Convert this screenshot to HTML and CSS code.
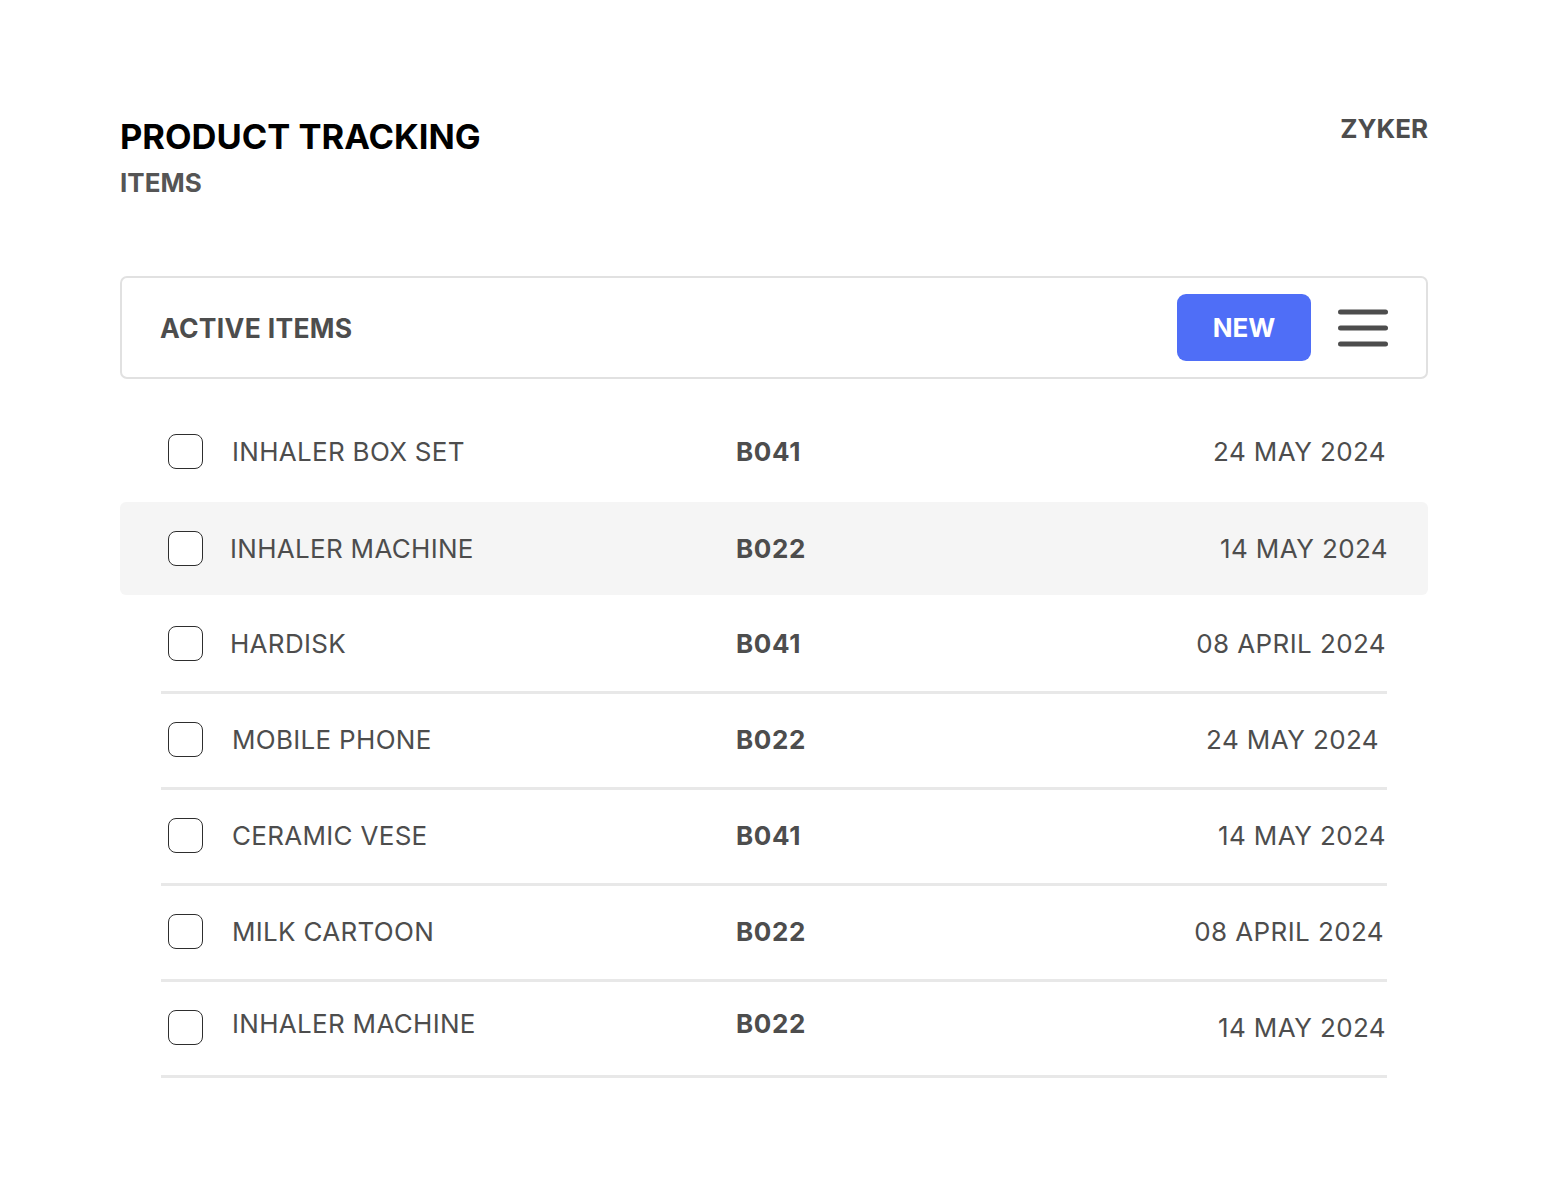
FILE: index.html
```html
<!DOCTYPE html>
<html lang="en">
<head>
<meta charset="utf-8">
<title>Product Tracking</title>
<link rel="stylesheet" href="styles.css">
</head>
<body>
<div class="page">
  <header class="header">
    <div class="titles">
      <h1 class="title">PRODUCT TRACKING</h1>
      <div class="subtitle">ITEMS</div>
    </div>
    <div class="brand">ZYKER</div>
  </header>

  <section class="toolbar">
    <div class="toolbar-title">ACTIVE ITEMS</div>
    <div class="toolbar-actions">
      <button class="btn-new">NEW</button>
      <svg class="menu-icon" width="50" height="38" viewBox="0 0 50 38">
        <line x1="2.5" y1="3" x2="47.5" y2="3" />
        <line x1="2.5" y1="19" x2="47.5" y2="19" />
        <line x1="2.5" y1="35" x2="47.5" y2="35" />
      </svg>
    </div>
  </section>

  <div class="list">
    <div class="row">
      <span class="check"></span>
      <span class="name">INHALER BOX SET</span>
      <span class="code">B041</span>
      <span class="date">24 MAY 2024</span>
    </div>
    <div class="row row-active">
      <span class="check"></span>
      <span class="name name-tight">INHALER MACHINE</span>
      <span class="code">B022</span>
      <span class="date date-wide">14 MAY 2024</span>
    </div>
    <div class="row row-sep">
      <span class="check"></span>
      <span class="name name-tight">HARDISK</span>
      <span class="code">B041</span>
      <span class="date">08 APRIL 2024</span>
    </div>
    <div class="row row-sep">
      <span class="check"></span>
      <span class="name">MOBILE PHONE</span>
      <span class="code">B022</span>
      <span class="date date-inset">24 MAY 2024</span>
    </div>
    <div class="row row-sep">
      <span class="check"></span>
      <span class="name">CERAMIC VESE</span>
      <span class="code">B041</span>
      <span class="date">14 MAY 2024</span>
    </div>
    <div class="row row-sep">
      <span class="check"></span>
      <span class="name">MILK CARTOON</span>
      <span class="code">B022</span>
      <span class="date date-shift">08 APRIL 2024</span>
    </div>
    <div class="row row-sep">
      <span class="check"></span>
      <span class="name name-up">INHALER MACHINE</span>
      <span class="code code-up">B022</span>
      <span class="date">14 MAY 2024</span>
    </div>
  </div>
</div>
</body>
</html>
```

FILE: styles.css
```css
* {
  box-sizing: border-box;
}

html, body {
  margin: 0;
  padding: 0;
  background: #ffffff;
}

body {
  font-family: Inter, "Noto Sans", "Liberation Sans", sans-serif;
  color: #4d4d4d;
}

.page {
  width: 1308px;
  margin: 0 0 0 120px;
  padding-top: 112px;
}

.header {
  display: flex;
  justify-content: space-between;
  align-items: flex-start;
}

.title {
  margin: 0;
  font-size: 34.5px;
  line-height: 50px;
  font-weight: 700;
  color: #000000;
  letter-spacing: 0;
}

.subtitle {
  margin-top: 6px;
  font-size: 26px;
  line-height: 30px;
  font-weight: 700;
  color: #555555;
}

.brand {
  font-size: 26px;
  line-height: 34px;
  font-weight: 700;
  color: #4d4d4d;
  margin-top: 0;
}

.toolbar {
  margin-top: 78px;
  height: 103px;
  border: 2px solid #e1e1e1;
  border-radius: 7px;
  display: flex;
  align-items: center;
  justify-content: space-between;
  padding: 0 38px 0 38px;
}

.toolbar-title {
  font-size: 26.5px;
  font-weight: 700;
  color: #4d4d4d;
  letter-spacing: 0.3px;
}

.toolbar-actions {
  display: flex;
  align-items: center;
  gap: 27px;
}

.btn-new {
  width: 134px;
  height: 67px;
  border: none;
  border-radius: 9px;
  background: #4f6ef7;
  color: #ffffff;
  font-family: inherit;
  font-size: 26px;
  font-weight: 700;
  padding: 0;
}

.menu-icon line {
  stroke: #4d4d4d;
  stroke-width: 5;
  stroke-linecap: round;
}

.list {
  margin-top: 27px;
}

.row {
  display: grid;
  grid-template-columns: 64px 504px 1fr auto;
  align-items: center;
  height: 96px;
  padding: 0 42px 5px 48px;
  font-size: 26px;
  color: #4d4d4d;
}

.row-active {
  background: #f5f5f5;
  border-radius: 6px;
  height: 93px;
  margin-bottom: 3px;
  padding-bottom: 0;
}

.row-sep {
  background-image: linear-gradient(#e8e8e8, #e8e8e8);
  background-size: calc(100% - 82px) 3px;
  background-position: 41px 100%;
  background-repeat: no-repeat;
}

.check {
  width: 35px;
  height: 35px;
  border: 1.5px solid #2e2e2e;
  border-radius: 8px;
  background: #ffffff;
}

.name {
  letter-spacing: 0.3px;
}

.name-tight {
  margin-left: -2px;
}

.name-up,
.code-up {
  position: relative;
  top: -4px;
}

.code {
  font-weight: 700;
  letter-spacing: 0.6px;
}

.date {
  text-align: right;
  letter-spacing: 0.4px;
}

.date-wide {
  margin-right: -2px;
}

.date-inset {
  margin-right: 7px;
}

.date-shift {
  margin-right: 2px;
}
```
